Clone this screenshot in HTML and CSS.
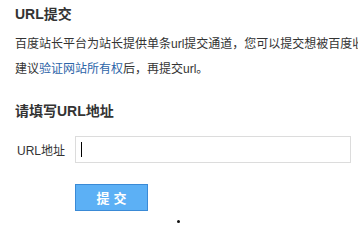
FILE: index.html
```html
<!DOCTYPE html>
<html lang="zh-CN">
<head>
    <meta charset="UTF-8">
    <title>URL提交</title>
    <link rel="stylesheet" href="styles.css">
</head>
<body>
    <div class="page">
        <h2 class="title">URL提交</h2>
        <p class="desc">
            百度站长平台为站长提供单条url提交通道，您可以提交想被百度收录的url，百度搜索引擎会按照标准处理，但不保证一定能够收录您提交的url。<br>
            建议<a href="#">验证网站所有权</a>后，再提交url。
        </p>

        <h3 class="sub-title">请填写URL地址</h3>
        <div class="form-row">
            <label class="form-label">URL地址</label>
            <div class="input-box"><span class="caret"></span></div>
        </div>
        <div class="btn-row">
            <button class="submit-btn">提交</button>
        </div>
        <div class="dot"></div>
    </div>
</body>
</html>
```

FILE: styles.css
```css
* {
    margin: 0;
    padding: 0;
    box-sizing: border-box;
}

body {
    background: #fff;
    color: #333;
    font-family: "Liberation Sans", "Noto Sans CJK SC", sans-serif;
    overflow: hidden;
}

.page {
    padding: 4px 0 0 15px;
}

.title {
    font-size: 14px;
    font-weight: bold;
    line-height: 20px;
    color: #333;
}

.desc {
    margin-top: 8px;
    font-size: 12px;
    line-height: 25px;
    color: #333;
    white-space: nowrap;
    overflow: hidden;
}

.desc a {
    color: #2c64a8;
    text-decoration: none;
}

.sub-title {
    margin-top: 19px;
    font-size: 14px;
    font-weight: bold;
    line-height: 20px;
    color: #333;
}

.form-row {
    margin-top: 15px;
    display: flex;
    align-items: center;
}

.form-label {
    width: 60px;
    padding-left: 2px;
    font-size: 12px;
    color: #333;
}

.input-box {
    width: 276px;
    height: 27px;
    border: 1px solid #dcdcdc;
    display: flex;
    align-items: center;
    padding-left: 5px;
}

.caret {
    width: 1px;
    height: 15px;
    background: #000;
}

.btn-row {
    margin-top: 21px;
    padding-left: 60px;
}

.submit-btn {
    width: 73px;
    height: 27px;
    background: #5cb0f5;
    border: 1px solid #3a8ad6;
    color: #fff;
    font-family: "Noto Sans CJK SC", sans-serif;
    font-size: 13px;
    font-weight: bold;
    letter-spacing: 4px;
    text-indent: 4px;
    cursor: pointer;
}

.dot {
    margin: 9px 0 0 162px;
    width: 3px;
    height: 3px;
    border-radius: 50%;
    background: #111;
}
```
